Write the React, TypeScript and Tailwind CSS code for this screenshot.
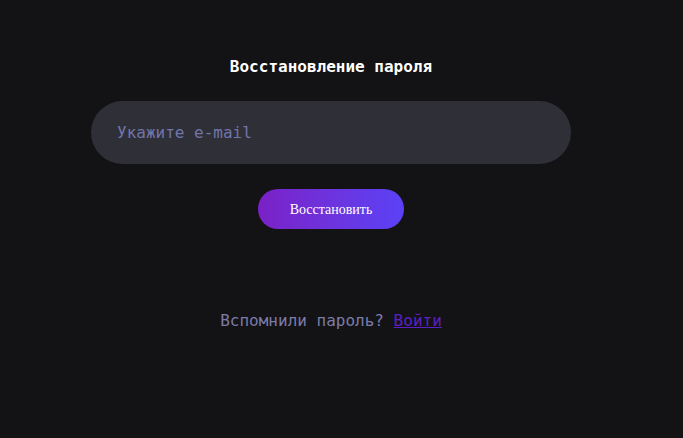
export default function App() {
  return (
    <div className="min-h-[438px] w-full bg-[#131315] font-['DejaVu_Sans_Mono',monospace]">
      <div className="flex w-[662px] flex-col items-center pt-[55px]">
        <h1 className="text-base leading-6 font-semibold text-white">Восстановление пароля</h1>
        <input
          type="email"
          placeholder="Укажите e-mail"
          className="mt-[22px] h-[63px] w-[480px] rounded-full bg-[#2f2f38] px-[26px] text-base text-white outline-none placeholder:text-[#7275a8] font-['DejaVu_Sans_Mono',monospace]"
        />
        <button className="mt-[25px] h-10 w-[146px] rounded-full bg-gradient-to-r from-[#7a20c6] to-[#5a41f6] font-['Liberation_Serif',serif] text-[14px] text-white">
          Восстановить
        </button>
        <p className="mt-[80px] text-base leading-6 text-[#7b7ba8]">
          Вспомнили пароль?{" "}
          <a href="#" className="text-[#5c1fc4] underline">Войти</a>
        </p>
      </div>
    </div>
  );
}
